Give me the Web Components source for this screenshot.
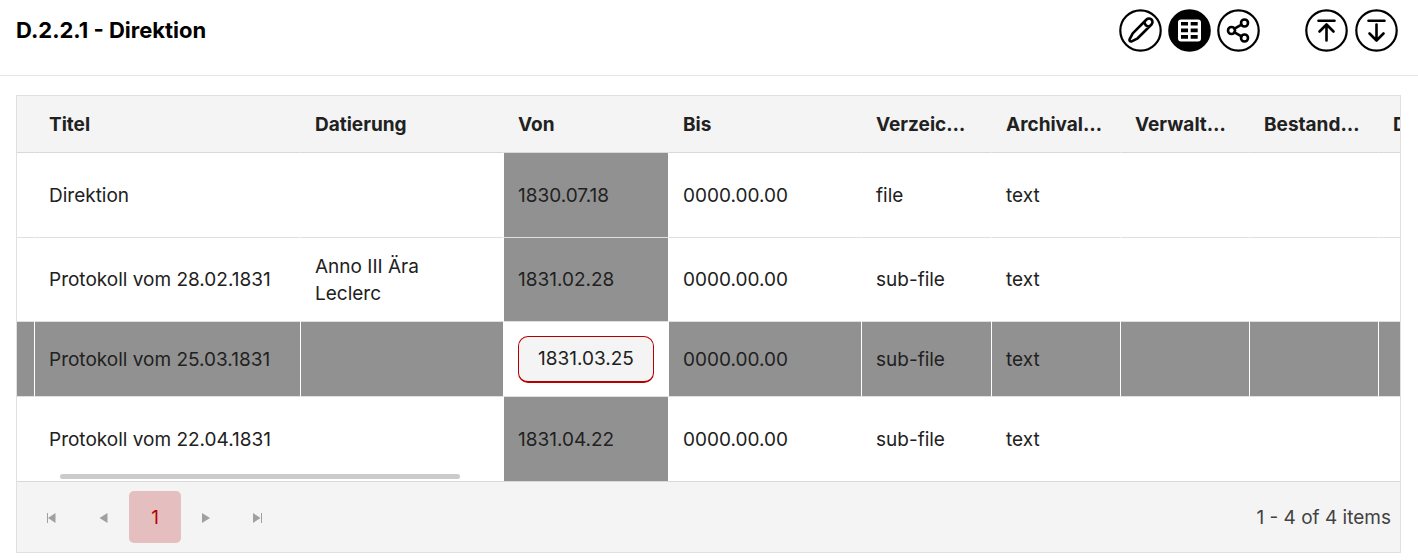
<!DOCTYPE html>
<html lang="de">
<head>
<meta charset="utf-8">
<meta name="viewport" content="width=device-width, initial-scale=1">
<title>D.2.2.1 - Direktion</title>
<style>
  body {
    margin: 0;
    background: #fff;
    color: #212121;
    font-family: Inter, "Liberation Sans", sans-serif;
    font-size: 19px;
    line-height: 27px;
    --line: #e0e0e0;
    --bar: #f4f4f4;
    --marked: #919191;
    --accent: #b70000;
  }
</style>
</head>
<body>
<page-header>
  D.2.2.1 - Direktion
  <icon-button slot="tools" icon="edit" label="Bearbeiten"></icon-button>
  <icon-button slot="tools" icon="table" label="Tabelle" active></icon-button>
  <icon-button slot="tools" icon="share" label="Teilen"></icon-button>
  <icon-button slot="nav" icon="up" label="Nach oben"></icon-button>
  <icon-button slot="nav" icon="down" label="Nach unten"></icon-button>
</page-header>
<record-grid>
  <grid-pager slot="footer" page="1">1 - 4 of 4 items</grid-pager>
</record-grid>

<script>
const icons = {
  edit: `<g transform="rotate(45 21.5 21.5)"><path d="M18 9.500a3.500 3.500 0 0 1 7 0V29l-2 6.500q-1.500 2-3 0L18 29zM18 12.500q3.500 3 7 0"/></g>`,
  table: `<rect x="10" y="10.500" width="23" height="22" rx="3" fill="#fff" stroke="none"/>
    <path stroke="none" fill="#000" d="M13 13h7v3.500h-7zM22.700 13h7v3.500h-7zM13 19.500h7v3.800h-7zM22.700 19.500h7v3.800h-7zM13 26h7v3.800h-7zM22.700 26h7v3.800h-7z"/>`,
  share: `<circle cx="14.500" cy="21.500" r="3.500"/><circle cx="27.500" cy="14" r="3.500"/><circle cx="27.500" cy="29" r="3.500"/><path d="M17.500 19.700l7-4M17.500 23.300l7 4"/>`,
  up: `<path d="M13.500 11.800h16M21.500 31.500V15.500M14.500 22.500l7-7 7 7"/>`,
  down: `<path d="M13.500 11.800h16M21.500 15.500v15.500M14.500 24.500l7 7 7-7"/>`
};

class IconButton extends HTMLElement {
  connectedCallback() {
    this.attachShadow({ mode: 'open' });
    this.shadowRoot.innerHTML = `
      <style>
        :host { display: block; }
        button {
          display: block;
          width: 43px;
          height: 43px;
          padding: 0;
          border: 0;
          background: none;
          color: #000;
          cursor: pointer;
        }
        svg {
          display: block;
          fill: none;
          stroke: currentColor;
          stroke-width: 2.6;
          stroke-linecap: round;
          stroke-linejoin: round;
        }
        .ring { stroke: #000; stroke-width: 2.2; }
        :host([active]) button { color: #fff; }
        :host([active]) .ring { fill: #000; }
      </style>
      <button type="button" aria-label="${this.getAttribute('label')}">
        <svg width="43" height="43" viewBox="0 0 43 43" aria-hidden="true">
          <circle class="ring" cx="21.500" cy="21.500" r="20.200"/>
          ${icons[this.getAttribute('icon')]}
        </svg>
      </button>
    `;
  }
}
customElements.define('icon-button', IconButton);

class PageHeader extends HTMLElement {
  connectedCallback() {
    this.attachShadow({ mode: 'open' });
    this.shadowRoot.innerHTML = `
      <style>
        :host { display: block; }
        header {
          display: flex;
          justify-content: space-between;
          align-items: flex-start;
          padding: 9px 20px 23px 16px;
          border-bottom: 1px solid #e6e6e6;
        }
        h1 {
          margin: 0;
          padding-top: 8px;
          color: #000;
          font-size: 22px;
          font-weight: 700;
          line-height: 27px;
        }
        .actions { display: flex; gap: 45px; }
        .group { display: flex; gap: 6px; }
        .nav { gap: 7px; }
      </style>
      <header>
        <h1><slot></slot></h1>
        <div class="actions">
          <div class="group"><slot name="tools"></slot></div>
          <div class="group nav"><slot name="nav"></slot></div>
        </div>
      </header>
    `;
  }
}
customElements.define('page-header', PageHeader);

const columns = [
  ['', 17], ['Titel', 266], ['Datierung', 203], ['Von', 165], ['Bis', 193],
  ['Verzeic…', 130], ['Archival…', 129], ['Verwalt…', 129], ['Bestand…', 129], ['D', 129]
];

const records = [
  ['Direktion', '', '1830.07.18', '0000.00.00', 'file', 'text'],
  ['Protokoll vom 28.02.1831', 'Anno III Ära Leclerc', '1831.02.28', '0000.00.00', 'sub-file', 'text'],
  ['Protokoll vom 25.03.1831', '', '1831.03.25', '0000.00.00', 'sub-file', 'text'],
  ['Protokoll vom 22.04.1831', '', '1831.04.22', '0000.00.00', 'sub-file', 'text']
];

const selectedRow = 2;
const markedColumn = 3;

class RecordGrid extends HTMLElement {
  connectedCallback() {
    this.attachShadow({ mode: 'open' });
    this.shadowRoot.innerHTML = `
      <style>
        :host {
          display: block;
          margin: 19px 17px 0 16px;
          border: 1px solid var(--line);
        }
        .view { position: relative; }
        .scroller { overflow-x: auto; scrollbar-width: none; }
        .thumb {
          position: absolute;
          left: 43px;
          bottom: 2px;
          width: 400px;
          height: 5px;
          border-radius: 3px;
          background: #cbcbcb;
        }
        table {
          width: 1490px;
          table-layout: fixed;
          border-collapse: separate;
          border-spacing: 0;
        }
        th, td {
          box-sizing: border-box;
          padding: 0 14px;
          border-left: 1px solid #fff;
          border-bottom: 1px solid var(--line);
          text-align: left;
          white-space: nowrap;
        }
        th:first-child, td:first-child { padding: 0; border-left: 0; }
        th {
          height: 57px;
          border-left-color: var(--bar);
          border-bottom-color: #d9d9d9;
          background: var(--bar);
          font-weight: 700;
        }
        td { height: 84px; }
        tbody tr:first-child td { height: 85px; }
        td.wrap { padding-right: 60px; white-space: normal; }
        tr:last-child td { border-bottom: 0; }
        .marked, .selected td { background: var(--marked); }
        .selected td { height: 75px; }
        .selected .marked { background: #fff; }
        .date {
          display: block;
          box-sizing: border-box;
          width: 100%;
          height: 47px;
          padding: 0;
          border: 1px solid var(--accent);
          border-bottom-width: 2px;
          border-radius: 10px;
          background: var(--bar);
          color: inherit;
          font: inherit;
        }
      </style>
      <div class="view">
        <div class="scroller">
          <table>
            <colgroup>${columns.map(([, width]) => `<col style="width: ${width}px">`).join('')}</colgroup>
            <thead>
              <tr>${columns.map(([name]) => `<th scope="col">${name}</th>`).join('')}</tr>
            </thead>
            <tbody>${records.map((record, i) => this.row(record, i)).join('')}</tbody>
          </table>
        </div>
        <div class="thumb"></div>
      </div>
      <slot name="footer"></slot>
    `;
  }

  row(record, index) {
    const cells = columns.map((column, i) => {
      const text = record[i - 1] || '';
      if (i === markedColumn) {
        const content = index === selectedRow ? `<button type="button" class="date">${text}</button>` : text;
        return `<td class="marked">${content}</td>`;
      }
      return `<td${i === 2 ? ' class="wrap"' : ''}>${text}</td>`;
    });
    return `<tr${index === selectedRow ? ' class="selected"' : ''}>${cells.join('')}</tr>`;
  }
}
customElements.define('record-grid', RecordGrid);

class GridPager extends HTMLElement {
  connectedCallback() {
    this.attachShadow({ mode: 'open' });
    this.shadowRoot.innerHTML = `
      <style>
        :host {
          display: flex;
          align-items: center;
          justify-content: space-between;
          padding: 9px 9px 9px 8px;
          border-top: 1px solid #d9d9d9;
          background: var(--bar);
          color: #424242;
        }
        nav { display: flex; }
        button {
          width: 52px;
          height: 52px;
          padding: 0;
          border: 0;
          border-radius: 5px;
          background: none;
          font: inherit;
        }
        svg { display: block; fill: #a0a0a0; }
        .current { background: #e5bfbf; color: var(--accent); }
      </style>
      <nav aria-label="Seiten">
        <button type="button" aria-label="Erste Seite" disabled>
          <svg width="52" height="52"><path d="M22 22h1v10h-1zM30.500 22v10l-7.500-5z"/></svg>
        </button>
        <button type="button" aria-label="Vorherige Seite" disabled>
          <svg width="52" height="52"><path d="M30.500 22v10l-8-5z"/></svg>
        </button>
        <button type="button" class="current" aria-current="page">${this.getAttribute('page')}</button>
        <button type="button" aria-label="Nächste Seite" disabled>
          <svg width="52" height="52"><path d="M21 22v10l8-5z"/></svg>
        </button>
        <button type="button" aria-label="Letzte Seite" disabled>
          <svg width="52" height="52"><path d="M28 22h1v10h-1zM20 22v10l7.500-5z"/></svg>
        </button>
      </nav>
      <span><slot></slot></span>
    `;
  }
}
customElements.define('grid-pager', GridPager);
</script>
</body>
</html>
